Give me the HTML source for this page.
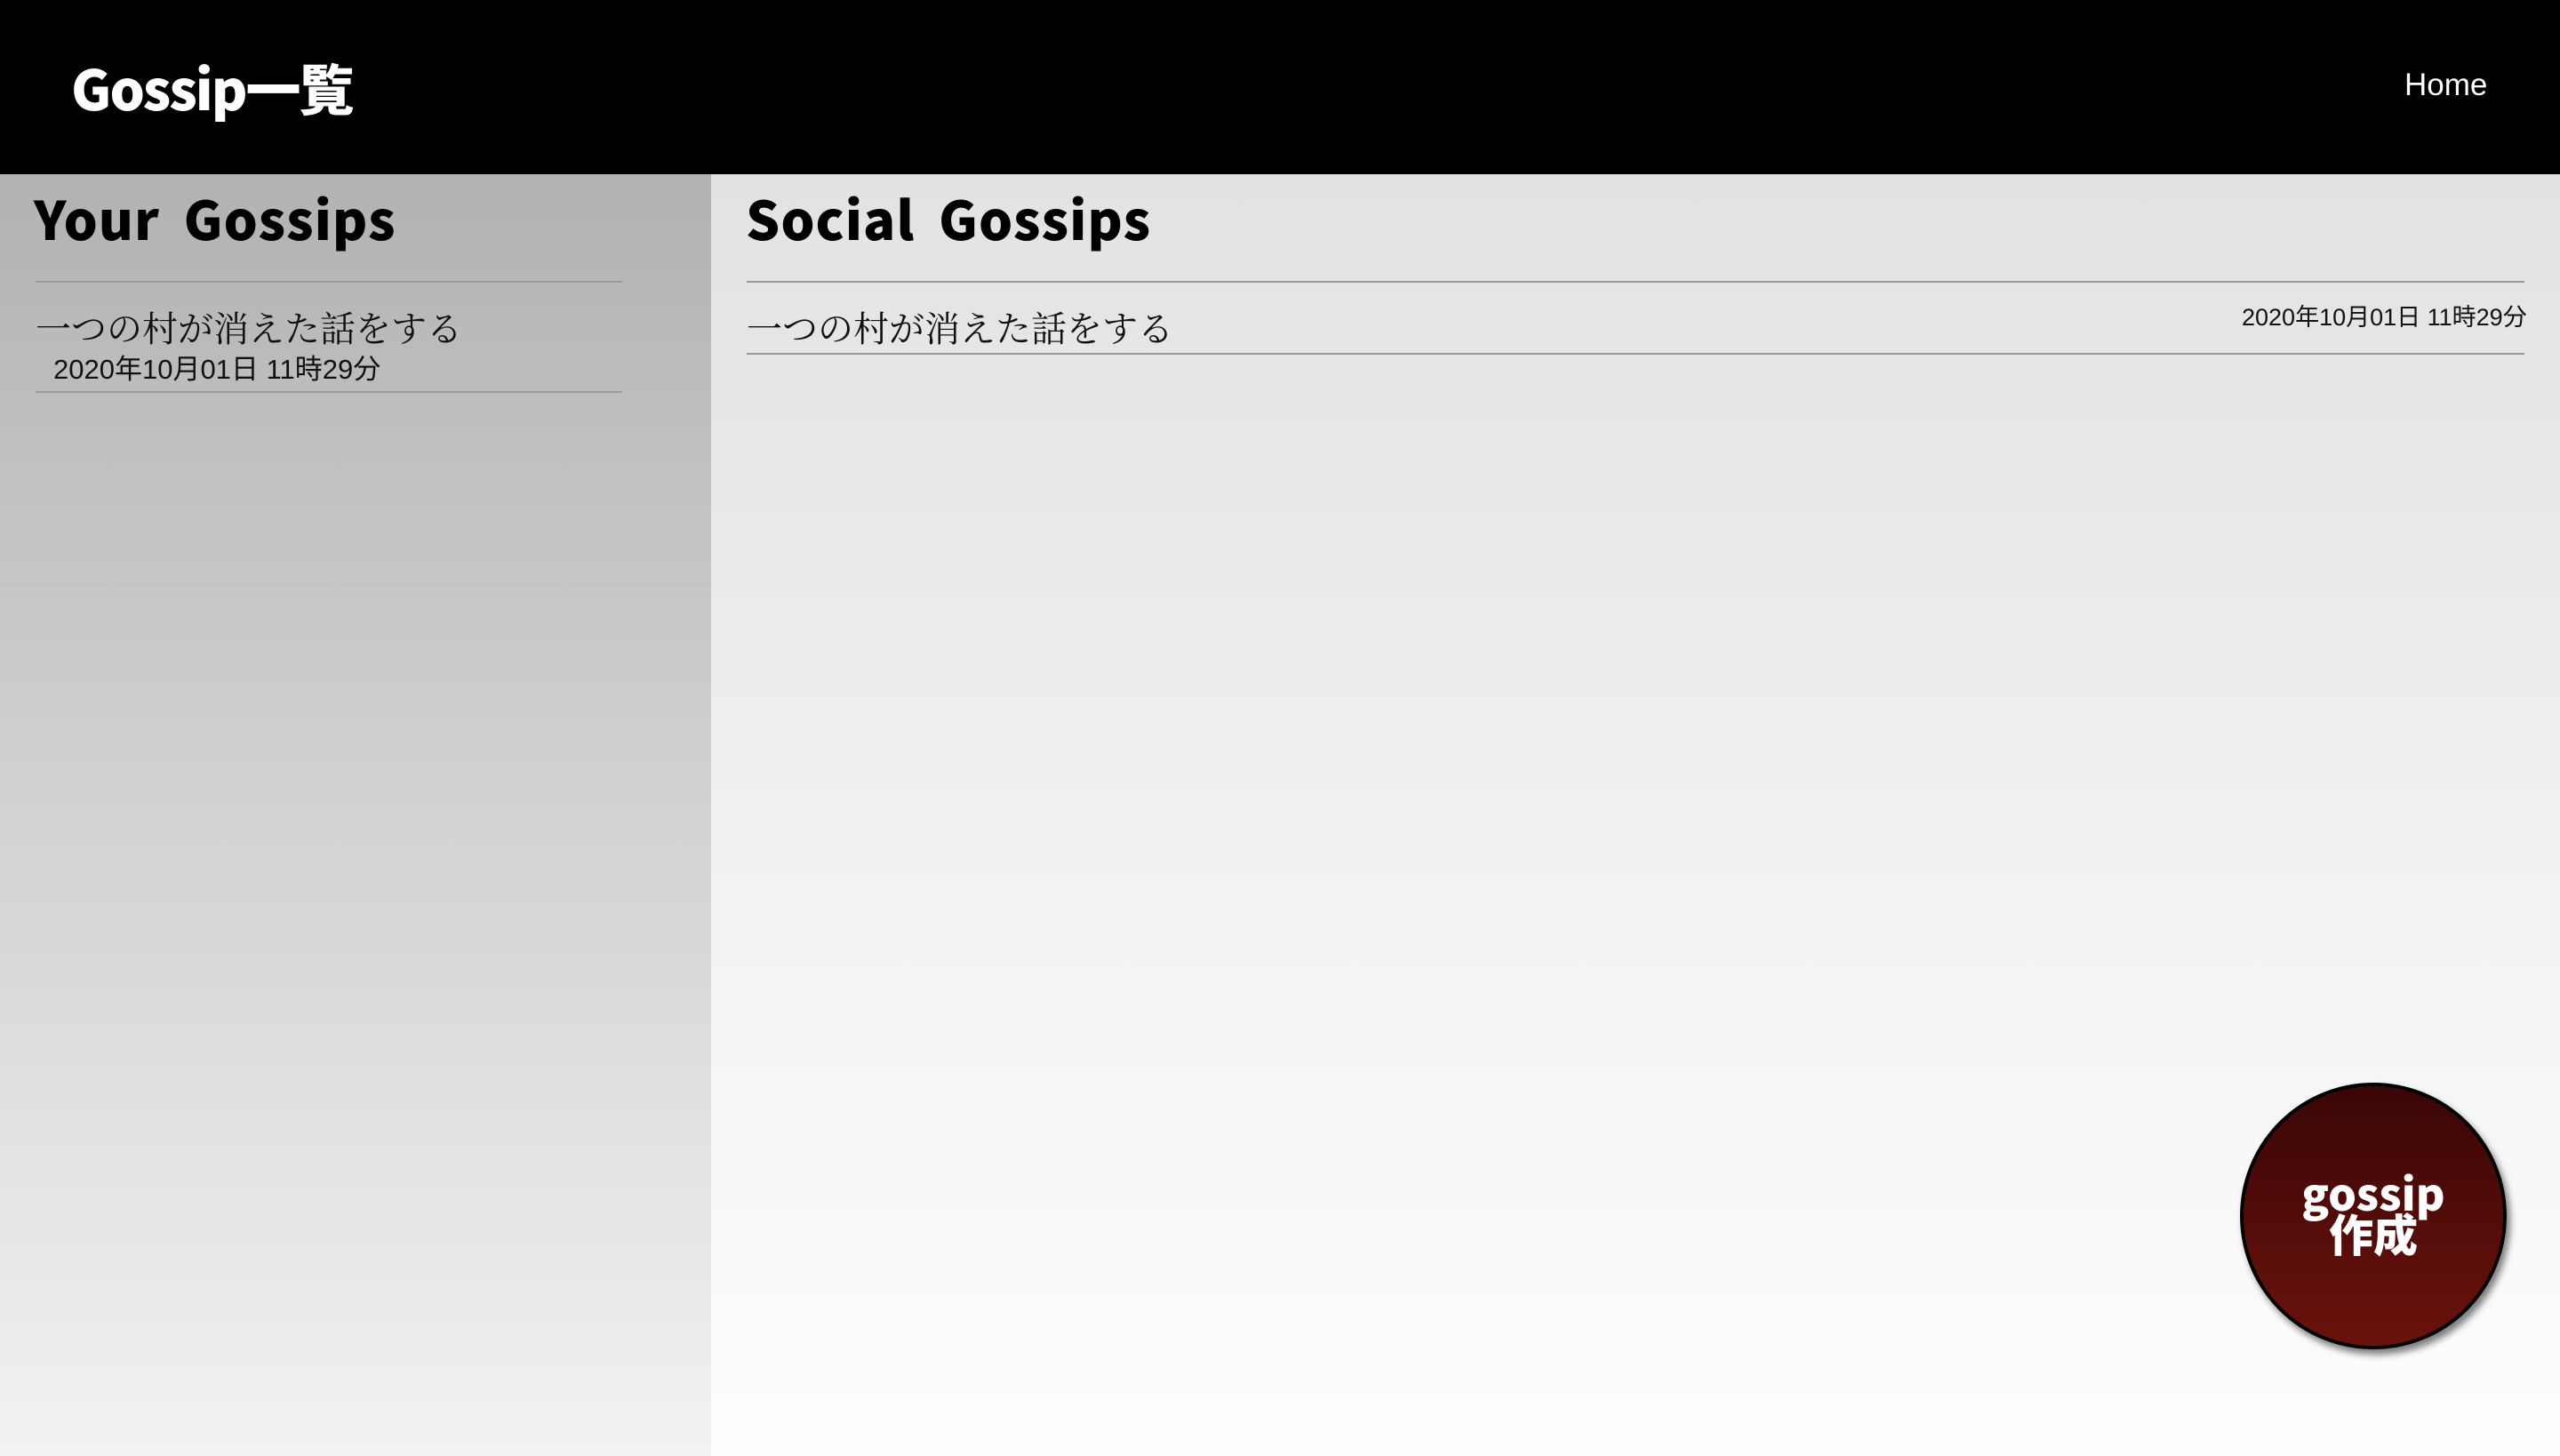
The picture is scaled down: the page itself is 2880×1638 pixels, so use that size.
<!DOCTYPE html>
<html><head><meta charset="utf-8"><style>
*{margin:0;padding:0;box-sizing:border-box}
body{width:2880px;height:1638px;overflow:hidden;font-family:"Liberation Sans","Noto Sans CJK JP",sans-serif;position:relative}
.hdr{position:absolute;left:0;top:0;width:2880px;height:196px;background:#000;color:#fff}
.hdr h1{position:absolute;left:80px;top:52px;font-size:62px;font-weight:900;font-family:"Noto Sans CJK JP",sans-serif;line-height:90px;letter-spacing:-2px}
.hdr .home{position:absolute;left:2705px;top:74px;font-size:35px;line-height:44px}
.left{position:absolute;left:0;top:196px;width:800px;height:1442px;background:linear-gradient(#b2b2b2,#f2f2f2)}
.right{position:absolute;left:800px;top:196px;width:2080px;height:1442px;background:linear-gradient(#e2e2e2,#fefefe)}
h2{position:absolute;font-family:"Noto Sans CJK JP",sans-serif;font-weight:900;font-size:60px;line-height:80px;letter-spacing:1px;word-spacing:12px}
.line{position:absolute;height:2px;background:#9a9a9a}
.t{position:absolute;font-family:"Noto Serif CJK SC","Liberation Serif",serif;font-size:40px;line-height:50px;color:#111}
.d{position:absolute;font-size:31px;line-height:34px;color:#111;font-family:"Liberation Sans","Noto Sans CJK JP",sans-serif}
.btn{position:absolute;left:2520px;top:1218px;width:300px;height:300px;border-radius:50%;border:4px solid #000;background:linear-gradient(#3a0605,#6a120c);box-shadow:4px 6px 8px rgba(0,0,0,.5);color:#fff;font-family:"Noto Sans CJK JP",sans-serif;font-weight:900;font-size:50px;line-height:46px;text-align:center;padding-top:96px}
</style></head><body>
<div class="hdr"><h1>Gossip一覧</h1><div class="home">Home</div></div>
<div class="left"></div>
<div class="right"></div>
<h2 style="left:38px;top:205px">Your Gossips</h2>
<div class="line" style="left:40px;top:316px;width:660px"></div>
<div class="t" style="left:40px;top:343px">一つの村が消えた話をする</div>
<div class="d" style="left:60px;top:399px">2020年10月01日 11時29分</div>
<div class="line" style="left:40px;top:440px;width:660px"></div>
<h2 style="left:839px;top:205px">Social Gossips</h2>
<div class="line" style="left:840px;top:316px;width:2000px"></div>
<div class="t" style="left:840px;top:343px">一つの村が消えた話をする</div>
<div class="d" style="left:2522px;top:340px;font-size:27px">2020年10月01日 11時29分</div>
<div class="line" style="left:840px;top:397px;width:2000px"></div>
<div class="btn">gossip<br>作成</div>
</body></html>
